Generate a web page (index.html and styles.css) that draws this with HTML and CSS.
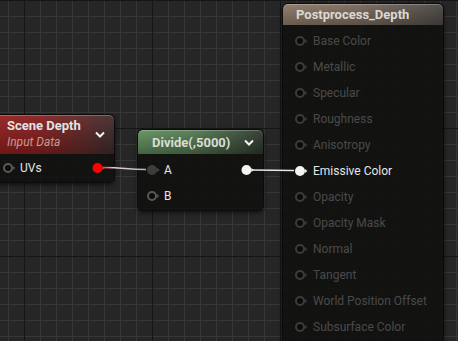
FILE: index.html
```html
<!DOCTYPE html>
<html>
<head>
<title>Material Graph</title>
<link rel="stylesheet" href="styles.css">
</head>
<body>

<div class="graph">

  <!-- Scene Depth expression -->
  <div class="node scene">
    <div class="node-head red">
      <div class="head-text">
        <div class="title">Scene Depth</div>
        <div class="subtitle">Input Data</div>
      </div>
      <svg class="chev" width="10" height="7" viewBox="0 0 10 7"><path d="M1 1.5 L5 5.5 L9 1.5" /></svg>
    </div>
    <div class="node-body">
      <div class="pin-row">
        <svg class="pin" width="14" height="12" viewBox="0 0 14 12"><circle class="ring" cx="5" cy="6" r="4" /><path class="tip dim" d="M10 4 L12.5 6 L10 8Z" /></svg>
        <span class="label">UVs</span>
        <span class="spacer"></span>
        <svg class="pin" width="14" height="12" viewBox="0 0 14 12"><circle class="fill-red" cx="5.5" cy="6" r="5" /><path class="tip red-tip" d="M10.5 4 L13 6 L10.5 8Z" /></svg>
      </div>
    </div>
  </div>

  <!-- Divide expression -->
  <div class="node divide">
    <div class="node-head green">
      <div class="title">Divide(,5000)</div>
      <svg class="chev" width="10" height="7" viewBox="0 0 10 7"><path d="M1 1.5 L5 5.5 L9 1.5" /></svg>
    </div>
    <div class="node-body">
      <div class="pin-row">
        <svg class="pin" width="14" height="12" viewBox="0 0 14 12"><circle class="fill-grey" cx="5" cy="6" r="5" /><path class="tip grey-tip" d="M10 4 L12.5 6 L10 8Z" /></svg>
        <span class="label">A</span>
        <span class="spacer"></span>
        <svg class="pin" width="14" height="12" viewBox="0 0 14 12"><circle class="fill-white" cx="5.5" cy="6" r="5" /><path class="tip white-tip" d="M10.5 4 L13 6 L10.5 8Z" /></svg>
      </div>
      <div class="pin-row">
        <svg class="pin" width="14" height="12" viewBox="0 0 14 12"><circle class="ring" cx="5" cy="6" r="4" /><path class="tip dim" d="M10 4 L12.5 6 L10 8Z" /></svg>
        <span class="label">B</span>
      </div>
    </div>
  </div>

  <!-- Material result node -->
  <div class="node result">
    <div class="node-head tan">
      <div class="title">Postprocess_Depth</div>
    </div>
    <div class="node-body">
      <div class="pin-row off"><svg class="pin" width="14" height="12" viewBox="0 0 14 12"><circle class="ring" cx="5" cy="6" r="4" /><path class="tip dim" d="M10 4 L12.5 6 L10 8Z" /></svg><span class="label">Base Color</span></div>
      <div class="pin-row off"><svg class="pin" width="14" height="12" viewBox="0 0 14 12"><circle class="ring" cx="5" cy="6" r="4" /><path class="tip dim" d="M10 4 L12.5 6 L10 8Z" /></svg><span class="label">Metallic</span></div>
      <div class="pin-row off"><svg class="pin" width="14" height="12" viewBox="0 0 14 12"><circle class="ring" cx="5" cy="6" r="4" /><path class="tip dim" d="M10 4 L12.5 6 L10 8Z" /></svg><span class="label">Specular</span></div>
      <div class="pin-row off"><svg class="pin" width="14" height="12" viewBox="0 0 14 12"><circle class="ring" cx="5" cy="6" r="4" /><path class="tip dim" d="M10 4 L12.5 6 L10 8Z" /></svg><span class="label">Roughness</span></div>
      <div class="pin-row off"><svg class="pin" width="14" height="12" viewBox="0 0 14 12"><circle class="ring" cx="5" cy="6" r="4" /><path class="tip dim" d="M10 4 L12.5 6 L10 8Z" /></svg><span class="label">Anisotropy</span></div>
      <div class="pin-row"><svg class="pin" width="14" height="12" viewBox="0 0 14 12"><circle class="fill-white" cx="5" cy="6" r="5" /><path class="tip white-tip" d="M10 4 L12.5 6 L10 8Z" /></svg><span class="label">Emissive Color</span></div>
      <div class="pin-row off"><svg class="pin" width="14" height="12" viewBox="0 0 14 12"><circle class="ring" cx="5" cy="6" r="4" /><path class="tip dim" d="M10 4 L12.5 6 L10 8Z" /></svg><span class="label">Opacity</span></div>
      <div class="pin-row off"><svg class="pin" width="14" height="12" viewBox="0 0 14 12"><circle class="ring" cx="5" cy="6" r="4" /><path class="tip dim" d="M10 4 L12.5 6 L10 8Z" /></svg><span class="label">Opacity Mask</span></div>
      <div class="pin-row off"><svg class="pin" width="14" height="12" viewBox="0 0 14 12"><circle class="ring" cx="5" cy="6" r="4" /><path class="tip dim" d="M10 4 L12.5 6 L10 8Z" /></svg><span class="label">Normal</span></div>
      <div class="pin-row off"><svg class="pin" width="14" height="12" viewBox="0 0 14 12"><circle class="ring" cx="5" cy="6" r="4" /><path class="tip dim" d="M10 4 L12.5 6 L10 8Z" /></svg><span class="label">Tangent</span></div>
      <div class="pin-row off"><svg class="pin" width="14" height="12" viewBox="0 0 14 12"><circle class="ring" cx="5" cy="6" r="4" /><path class="tip dim" d="M10 4 L12.5 6 L10 8Z" /></svg><span class="label">World Position Offset</span></div>
      <div class="pin-row off"><svg class="pin" width="14" height="12" viewBox="0 0 14 12"><circle class="ring" cx="5" cy="6" r="4" /><path class="tip dim" d="M10 4 L12.5 6 L10 8Z" /></svg><span class="label">Subsurface Color</span></div>
    </div>
  </div>

  <!-- wires -->
  <svg class="wires" width="458" height="341" viewBox="0 0 458 341">
    <defs>
      <linearGradient id="w1" x1="103" y1="0" x2="146" y2="0" gradientUnits="userSpaceOnUse">
        <stop offset="0" stop-color="#ff3030" />
        <stop offset="0.25" stop-color="#e8d0d0" />
        <stop offset="1" stop-color="#b8b8b8" />
      </linearGradient>
    </defs>
    <path d="M103 167.5 C125 167.5, 125 169.5, 146 169.5" stroke="url(#w1)" stroke-width="1.6" fill="none" />
    <path d="M251 170 L294 170.5" stroke="#e6e6e6" stroke-width="1.6" fill="none" />
  </svg>

</div>

</body>
</html>
```

FILE: styles.css
```css
body { margin: 0; background: #262626; }

.graph {
	position: relative;
	width: 458px;
	height: 341px;
	overflow: hidden;
	font-family: Roboto, "Liberation Sans", sans-serif;
	background-color: #262626;
	background-image:
		linear-gradient(to right, #161616 1px, transparent 1px),
		linear-gradient(to bottom, #161616 1px, transparent 1px),
		linear-gradient(to right, #373737 1px, transparent 1px),
		linear-gradient(to bottom, #373737 1px, transparent 1px);
	background-size: 128px 100%, 100% 128px, 16px 100%, 100% 16px;
	background-position: 24px 0, 0 0, 8px 0, 0 0;
}

/* nodes sit on the graph canvas at their own coordinates */
.node {
	position: absolute;
	display: flex;
	flex-direction: column;
	border-radius: 6px;
	background: rgba(17, 18, 16, 0.9);
	border: 1px solid #0b0b0b;
	box-shadow: 0 2px 4px rgba(0, 0, 0, 0.55);
}
.node.scene { left: -20px; top: 114px; width: 133px; height: 67px; }
.node.divide { left: 137px; top: 129px; width: 125px; height: 80px; }
.node.result { left: 282px; top: 3px; width: 160px; height: 360px; }

.node-head {
	display: flex;
	align-items: center;
	border-radius: 5px 5px 0 0;
	box-shadow: inset 0 1px 0 rgba(255, 255, 255, 0.25);
}
.node-head.red {
	height: 39px;
	padding: 0 9px 0 26px;
	background:
		linear-gradient(to bottom, rgba(255, 255, 255, 0.06), rgba(0, 0, 0, 0.25)),
		linear-gradient(to right, #9a1f1f 0%, #861f1f 45%, #5a2828 80%, #3f2b2b 100%);
}
.node-head.green {
	height: 24px;
	padding: 0 9px 0 14px;
	background:
		linear-gradient(to bottom, rgba(255, 255, 255, 0.05), rgba(0, 0, 0, 0.3)),
		linear-gradient(to right, #63915f 0%, #557a52 45%, #3e513c 80%, #2f3a2e 100%);
}
.node-head.tan {
	height: 21px;
	padding: 0 9px 0 13px;
	background:
		linear-gradient(to bottom, rgba(255, 255, 255, 0.04), rgba(0, 0, 0, 0.25)),
		linear-gradient(to right, #8e7b69 0%, #7c6d60 45%, #5f5852 80%, #4c4845 100%);
}

.head-text { display: flex; flex-direction: column; }
.title {
	font-size: 13px;
	font-weight: bold;
	color: #e2e2e2;
	flex: 1;
	white-space: nowrap;
}
.head-text .title { line-height: 16px; margin-top: -1px; }
.subtitle {
	font-size: 12px;
	font-style: italic;
	color: #c99a8c;
	line-height: 16px;
}
.red .head-text { flex: 1; }
.green .title { color: #d6ddd5; }
.tan .title { color: #dcd8d3; }

.chev { flex: none; }
.chev path { fill: none; stroke: #f2f2f2; stroke-width: 2; }

.node-body { padding: 0 5px 0 2px; }
.scene .node-body { padding: 1px 5px 0 22px; }
.divide .node-body { padding: 3px 5px 0 9px; }
.result .node-body { padding: 3px 5px 0 12px; }

.pin-row {
	display: flex;
	align-items: center;
	height: 26px;
	font-size: 12px;
	color: #e6e6e6;
}
.pin { flex: none; margin-right: 3px; }
.result .pin { margin-right: 4px; }
.label { white-space: nowrap; }
.spacer { flex: 1; }
.off .label { color: #4a4a4a; }

.ring { fill: #0c0c0c; stroke: #5a5a5a; stroke-width: 2; }
.off .ring { stroke: #3c3c3c; }
.tip.dim { fill: #4a4a4a; }
.off .tip.dim { fill: #363636; }
.fill-red { fill: #ff0000; }
.red-tip { fill: #ff2020; }
.fill-white { fill: #f4f4f4; }
.white-tip { fill: #e0e0e0; }
.fill-grey { fill: #3d3d3d; }
.grey-tip { fill: #4a4a4a; }

.wires { position: absolute; left: 0; top: 0; pointer-events: none; }
```
